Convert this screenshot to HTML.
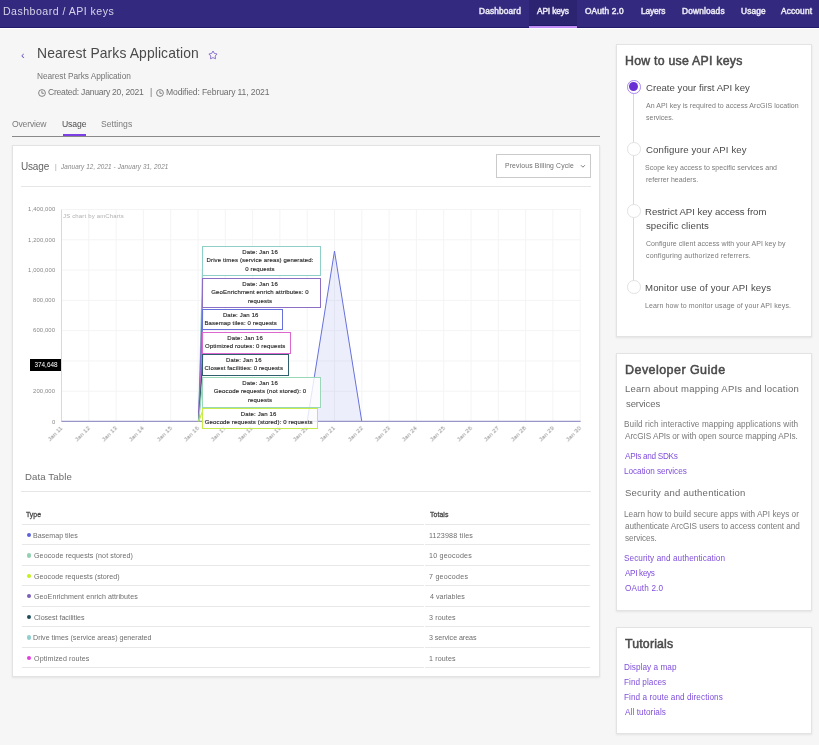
<!DOCTYPE html>
<html><head><meta charset="utf-8"><title>API keys</title>
<style>
html,body{margin:0;padding:0;}
body{width:819px;height:745px;overflow:hidden;position:relative;background:#f6f6f6;font-family:"Liberation Sans", sans-serif;}
.t{position:absolute;white-space:nowrap;line-height:1;will-change:transform;}
.r{position:absolute;}
.xl{transform-origin:100% 0;transform:rotate(-45deg);line-height:1;}
.tip{position:absolute;box-sizing:border-box;border:1.2px solid;background:rgba(255,255,255,0.82);font-size:6px;letter-spacing:0.14px;line-height:8.4px;color:#2a2a2a;text-align:center;padding-top:0.9px;padding-right:3px;white-space:nowrap;-webkit-text-stroke:0.15px #2a2a2a;will-change:transform;}
</style></head><body>
<div class="r" style="left:0px;top:0px;width:819px;height:28px;background:#33297e;"></div>
<div class="r" style="left:0px;top:27px;width:819px;height:1px;background:#22196b;"></div>
<div class="r" style="left:0px;top:28px;width:819px;height:1px;background:#ffffff;"></div>
<div class="t " style="left:3.00px;top:6.00px;font-size:10.6px;color:#d6d3ea;letter-spacing:0.4687px;">Dashboard / API keys</div>
<div class="r" style="left:528.9px;top:0px;width:48.1px;height:25px;background:#2c2470;"></div>
<div class="r" style="left:528.9px;top:25px;width:48.1px;height:1px;background:#201868;"></div>
<div class="r" style="left:528.9px;top:26px;width:48.1px;height:2px;background:#c18ef7;"></div>
<div class="t nav" style="left:479.00px;top:7.00px;font-size:8.3px;color:#e8e6f4;-webkit-text-stroke:0.5px #e8e6f4;letter-spacing:0.1569px;">Dashboard</div>
<div class="t nav" style="left:537.00px;top:7.00px;font-size:8.3px;color:#e8e6f4;-webkit-text-stroke:0.5px #e8e6f4;letter-spacing:-0.107px;">API keys</div>
<div class="t nav" style="left:585.00px;top:7.00px;font-size:8.3px;color:#e8e6f4;-webkit-text-stroke:0.5px #e8e6f4;letter-spacing:0.1555px;">OAuth 2.0</div>
<div class="t nav" style="left:641.00px;top:7.00px;font-size:8.3px;color:#e8e6f4;-webkit-text-stroke:0.5px #e8e6f4;letter-spacing:-0.106px;">Layers</div>
<div class="t nav" style="left:682.00px;top:7.00px;font-size:8.3px;color:#e8e6f4;-webkit-text-stroke:0.5px #e8e6f4;letter-spacing:0.1876px;">Downloads</div>
<div class="t nav" style="left:741.00px;top:7.00px;font-size:8.3px;color:#e8e6f4;-webkit-text-stroke:0.5px #e8e6f4;letter-spacing:0.146px;">Usage</div>
<div class="t nav" style="left:781.00px;top:7.00px;font-size:8.3px;color:#e8e6f4;-webkit-text-stroke:0.5px #e8e6f4;letter-spacing:0.169px;">Account</div>
<div class="t " style="left:20.50px;top:50.00px;font-size:11px;color:#6b4fc4;">&#8249;</div>
<div class="t " style="left:37.00px;top:47.00px;font-size:13.9px;color:#4a4a4a;letter-spacing:0.112px;">Nearest Parks Application</div>
<svg class="r" style="left:208px;top:50.2px;width:10px;height:10px" viewBox="0 0 10 10"><path d="M5.00 1.00 L6.35 3.44 L9.09 3.97 L7.19 6.01 L7.53 8.78 L5.00 7.60 L2.47 8.78 L2.81 6.01 L0.91 3.97 L3.65 3.44 Z" fill="none" stroke="#7d5fc8" stroke-width="0.85" stroke-linejoin="round"/></svg>
<div class="t " style="left:37.00px;top:72.00px;font-size:8.3px;color:#757575;letter-spacing:-0.0486px;">Nearest Parks Application</div>
<svg class="r" style="left:38.3px;top:89.2px;width:8px;height:8px" viewBox="0 0 8 8"><circle cx="4" cy="4" r="3.4" fill="none" stroke="#707070" stroke-width="0.85"/><path d="M3.9 1.9 V4.3 H5.9" fill="none" stroke="#707070" stroke-width="0.85"/></svg>
<div class="t " style="left:48.00px;top:88.00px;font-size:8.6px;color:#6e6e6e;letter-spacing:-0.2494px;">Created: January 20, 2021</div>
<div class="t " style="left:150.30px;top:88.00px;font-size:8.6px;color:#6e6e6e;">|</div>
<svg class="r" style="left:156.3px;top:89.2px;width:8px;height:8px" viewBox="0 0 8 8"><circle cx="4" cy="4" r="3.4" fill="none" stroke="#707070" stroke-width="0.85"/><path d="M3.9 1.9 V4.3 H5.9" fill="none" stroke="#707070" stroke-width="0.85"/></svg>
<div class="t " style="left:166.00px;top:88.00px;font-size:8.6px;color:#6e6e6e;letter-spacing:-0.1278px;">Modified: February 11, 2021</div>
<div class="t " style="left:12.00px;top:120.00px;font-size:8.6px;color:#7a7a7a;letter-spacing:-0.1861px;">Overview</div>
<div class="t " style="left:62.00px;top:120.00px;font-size:8.6px;color:#4c4c4c;letter-spacing:-0.106px;">Usage</div>
<div class="t " style="left:101.00px;top:120.00px;font-size:8.6px;color:#7a7a7a;letter-spacing:0.0209px;">Settings</div>
<div class="r" style="left:12px;top:136px;width:588px;height:1px;background:#8a8a8a;"></div>
<div class="r" style="left:63.3px;top:133.8px;width:22.7px;height:2.2px;background:#7b3fe4;"></div>
<div class="r" style="left:12px;top:145px;width:588px;height:532px;background:#fff;border:1px solid #e3e3e3;box-sizing:border-box;box-shadow:0 1px 2px rgba(0,0,0,0.08);"></div>
<div class="t " style="left:21.00px;top:162.00px;font-size:10px;color:#626262;letter-spacing:-0.178px;">Usage</div>
<div class="t " style="left:55.00px;top:164.00px;font-size:6.6px;color:#9a9a9a;">|</div>
<div class="t " style="left:61.00px;top:164.00px;font-size:6.3px;color:#858585;letter-spacing:0.1288px;font-style:italic;">January 12, 2021 - January 31, 2021</div>
<div class="r" style="left:496px;top:154px;width:95px;height:24px;border:1px solid #cacaca;box-sizing:border-box;"></div>
<div class="t " style="left:505.00px;top:163.00px;font-size:6.8px;color:#6e6e6e;letter-spacing:0.1623px;">Previous Billing Cycle</div>
<svg class="r" style="left:579.5px;top:164px;width:6px;height:5px" viewBox="0 0 6 5"><path d="M0.9 1.2 L2.9 3.2 L4.9 1.2" fill="none" stroke="#707070" stroke-width="0.9"/></svg>
<div class="r" style="left:21px;top:186px;width:570px;height:1px;background:#e6e6e6;"></div>
<svg class="r" style="left:0;top:0;width:819px;height:745px" viewBox="0 0 819 745"><line x1="61.5" y1="209.50" x2="580.6" y2="209.50" stroke="#f4f4f4" stroke-width="1"/><line x1="61.5" y1="239.79" x2="580.6" y2="239.79" stroke="#f4f4f4" stroke-width="1"/><line x1="61.5" y1="270.08" x2="580.6" y2="270.08" stroke="#f4f4f4" stroke-width="1"/><line x1="61.5" y1="300.37" x2="580.6" y2="300.37" stroke="#f4f4f4" stroke-width="1"/><line x1="61.5" y1="330.66" x2="580.6" y2="330.66" stroke="#f4f4f4" stroke-width="1"/><line x1="61.5" y1="360.95" x2="580.6" y2="360.95" stroke="#f4f4f4" stroke-width="1"/><line x1="61.5" y1="391.24" x2="580.6" y2="391.24" stroke="#f4f4f4" stroke-width="1"/><line x1="61.5" y1="421.53" x2="580.6" y2="421.53" stroke="#f4f4f4" stroke-width="1"/><line x1="61.50" y1="209.5" x2="61.50" y2="421.5" stroke="#f4f4f4" stroke-width="1"/><line x1="88.80" y1="209.5" x2="88.80" y2="421.5" stroke="#f4f4f4" stroke-width="1"/><line x1="116.10" y1="209.5" x2="116.10" y2="421.5" stroke="#f4f4f4" stroke-width="1"/><line x1="143.40" y1="209.5" x2="143.40" y2="421.5" stroke="#f4f4f4" stroke-width="1"/><line x1="170.70" y1="209.5" x2="170.70" y2="421.5" stroke="#f4f4f4" stroke-width="1"/><line x1="198.00" y1="209.5" x2="198.00" y2="421.5" stroke="#f4f4f4" stroke-width="1"/><line x1="225.30" y1="209.5" x2="225.30" y2="421.5" stroke="#f4f4f4" stroke-width="1"/><line x1="252.60" y1="209.5" x2="252.60" y2="421.5" stroke="#f4f4f4" stroke-width="1"/><line x1="279.90" y1="209.5" x2="279.90" y2="421.5" stroke="#f4f4f4" stroke-width="1"/><line x1="307.20" y1="209.5" x2="307.20" y2="421.5" stroke="#f4f4f4" stroke-width="1"/><line x1="334.50" y1="209.5" x2="334.50" y2="421.5" stroke="#f4f4f4" stroke-width="1"/><line x1="361.80" y1="209.5" x2="361.80" y2="421.5" stroke="#f4f4f4" stroke-width="1"/><line x1="389.10" y1="209.5" x2="389.10" y2="421.5" stroke="#f4f4f4" stroke-width="1"/><line x1="416.40" y1="209.5" x2="416.40" y2="421.5" stroke="#f4f4f4" stroke-width="1"/><line x1="443.70" y1="209.5" x2="443.70" y2="421.5" stroke="#f4f4f4" stroke-width="1"/><line x1="471.00" y1="209.5" x2="471.00" y2="421.5" stroke="#f4f4f4" stroke-width="1"/><line x1="498.30" y1="209.5" x2="498.30" y2="421.5" stroke="#f4f4f4" stroke-width="1"/><line x1="525.60" y1="209.5" x2="525.60" y2="421.5" stroke="#f4f4f4" stroke-width="1"/><line x1="552.90" y1="209.5" x2="552.90" y2="421.5" stroke="#f4f4f4" stroke-width="1"/><line x1="580.20" y1="209.5" x2="580.20" y2="421.5" stroke="#f4f4f4" stroke-width="1"/><line x1="61.5" y1="209.5" x2="61.5" y2="421.5" stroke="#d9d9d9" stroke-width="1"/><path d="M307.20 421.5 L334.50 251 L361.80 421.5 Z" fill="#6771dc" fill-opacity="0.12" stroke="none"/><path d="M307.20 421.5 L334.50 251 L361.80 421.5" fill="none" stroke="#6771dc" stroke-width="1"/><line x1="61.5" y1="421.3" x2="580.6" y2="421.3" stroke="#9896c8" stroke-width="1.3"/></svg>
<div class="t " style="right:763.80px;top:207.00px;font-size:5.9px;color:#888888;letter-spacing:0.12px;">1,400,000</div>
<div class="t " style="right:763.80px;top:238.00px;font-size:5.9px;color:#888888;letter-spacing:0.12px;">1,200,000</div>
<div class="t " style="right:763.80px;top:268.00px;font-size:5.9px;color:#888888;letter-spacing:0.12px;">1,000,000</div>
<div class="t " style="right:763.80px;top:298.00px;font-size:5.9px;color:#888888;letter-spacing:0.12px;">800,000</div>
<div class="t " style="right:763.80px;top:328.00px;font-size:5.9px;color:#888888;letter-spacing:0.12px;">600,000</div>
<div class="t " style="right:763.80px;top:389.00px;font-size:5.9px;color:#888888;letter-spacing:0.12px;">200,000</div>
<div class="t " style="right:763.80px;top:420.00px;font-size:5.9px;color:#888888;letter-spacing:0.12px;">0</div>
<div class="t " style="left:63.00px;top:213.00px;font-size:6px;color:#b0b0b0;letter-spacing:0.167px;">JS chart by amCharts</div>
<div class="t xl" style="right:759.70px;top:425.2px;font-size:6px;letter-spacing:0.15px;color:#8a8a8a;">Jan 11</div>
<div class="t xl" style="right:732.40px;top:425.2px;font-size:6px;letter-spacing:0.15px;color:#8a8a8a;">Jan 12</div>
<div class="t xl" style="right:705.10px;top:425.2px;font-size:6px;letter-spacing:0.15px;color:#8a8a8a;">Jan 13</div>
<div class="t xl" style="right:677.80px;top:425.2px;font-size:6px;letter-spacing:0.15px;color:#8a8a8a;">Jan 14</div>
<div class="t xl" style="right:650.50px;top:425.2px;font-size:6px;letter-spacing:0.15px;color:#8a8a8a;">Jan 15</div>
<div class="t xl" style="right:623.20px;top:425.2px;font-size:6px;letter-spacing:0.15px;color:#8a8a8a;">Jan 16</div>
<div class="t xl" style="right:595.90px;top:425.2px;font-size:6px;letter-spacing:0.15px;color:#8a8a8a;">Jan 17</div>
<div class="t xl" style="right:568.60px;top:425.2px;font-size:6px;letter-spacing:0.15px;color:#8a8a8a;">Jan 18</div>
<div class="t xl" style="right:541.30px;top:425.2px;font-size:6px;letter-spacing:0.15px;color:#8a8a8a;">Jan 19</div>
<div class="t xl" style="right:514.00px;top:425.2px;font-size:6px;letter-spacing:0.15px;color:#8a8a8a;">Jan 20</div>
<div class="t xl" style="right:486.70px;top:425.2px;font-size:6px;letter-spacing:0.15px;color:#8a8a8a;">Jan 21</div>
<div class="t xl" style="right:459.40px;top:425.2px;font-size:6px;letter-spacing:0.15px;color:#8a8a8a;">Jan 22</div>
<div class="t xl" style="right:432.10px;top:425.2px;font-size:6px;letter-spacing:0.15px;color:#8a8a8a;">Jan 23</div>
<div class="t xl" style="right:404.80px;top:425.2px;font-size:6px;letter-spacing:0.15px;color:#8a8a8a;">Jan 24</div>
<div class="t xl" style="right:377.50px;top:425.2px;font-size:6px;letter-spacing:0.15px;color:#8a8a8a;">Jan 25</div>
<div class="t xl" style="right:350.20px;top:425.2px;font-size:6px;letter-spacing:0.15px;color:#8a8a8a;">Jan 26</div>
<div class="t xl" style="right:322.90px;top:425.2px;font-size:6px;letter-spacing:0.15px;color:#8a8a8a;">Jan 27</div>
<div class="t xl" style="right:295.60px;top:425.2px;font-size:6px;letter-spacing:0.15px;color:#8a8a8a;">Jan 28</div>
<div class="t xl" style="right:268.30px;top:425.2px;font-size:6px;letter-spacing:0.15px;color:#8a8a8a;">Jan 29</div>
<div class="t xl" style="right:241.00px;top:425.2px;font-size:6px;letter-spacing:0.15px;color:#8a8a8a;">Jan 30</div>
<div class="r" style="left:30.3px;top:358.5px;width:30.9px;height:12.8px;background:#000;"></div>
<div class="t " style="left:45.75px;top:362.00px;font-size:6.4px;color:#fff;transform:translateX(-50%);">374,648</div>
<svg class="r" style="left:0;top:0;width:819px;height:745px" viewBox="0 0 819 745"><line x1="198.6" y1="421.5" x2="203.1" y2="247.3" stroke="#8fcfc8" stroke-width="1.2"/><line x1="198.6" y1="421.5" x2="203.1" y2="279.1" stroke="#8c6fc4" stroke-width="1.2"/><line x1="198.6" y1="421.5" x2="203.1" y2="310.4" stroke="#6771dc" stroke-width="1.2"/><line x1="198.6" y1="421.5" x2="203.1" y2="333.1" stroke="#dc67ce" stroke-width="1.2"/><line x1="198.6" y1="421.5" x2="203.1" y2="355.0" stroke="#2f5f6c" stroke-width="1.2"/><line x1="198.6" y1="421.5" x2="203.1" y2="378.0" stroke="#9ad6b8" stroke-width="1.2"/><line x1="198.6" y1="421.5" x2="203.1" y2="409.7" stroke="#c5ec4a" stroke-width="1.2"/></svg>
<div class="tip" style="left:201.8px;top:246.0px;width:119.1px;height:29.8px;border-color:#8fcfc8;"><div>Date: Jan 16</div><div>Drive times (service areas) generated:</div><div>0 requests</div></div>
<div class="tip" style="left:201.8px;top:277.8px;width:119.1px;height:30.3px;border-color:#8c6fc4;"><div>Date: Jan 16</div><div>GeoEnrichment enrich attributes: 0</div><div>requests</div></div>
<div class="tip" style="left:201.8px;top:309.1px;width:80.5px;height:21.2px;border-color:#6771dc;"><div>Date: Jan 16</div><div>Basemap tiles: 0 requests</div></div>
<div class="tip" style="left:201.8px;top:331.8px;width:89.4px;height:21.6px;border-color:#dc67ce;"><div>Date: Jan 16</div><div>Optimized routes: 0 requests</div></div>
<div class="tip" style="left:201.8px;top:353.7px;width:86.6px;height:21.9px;border-color:#2f5f6c;"><div>Date: Jan 16</div><div>Closest facilities: 0 requests</div></div>
<div class="tip" style="left:201.8px;top:376.7px;width:119.1px;height:30.6px;border-color:#9ad6b8;"><div>Date: Jan 16</div><div>Geocode requests (not stored): 0</div><div>requests</div></div>
<div class="tip" style="left:201.8px;top:408.4px;width:116.4px;height:21.2px;border-color:#c5ec4a;"><div>Date: Jan 16</div><div>Geocode requests (stored): 0 requests</div></div>
<div class="t " style="left:25.00px;top:472.00px;font-size:9.6px;color:#6a6a6a;letter-spacing:0.1236px;">Data Table</div>
<div class="r" style="left:21px;top:491px;width:570px;height:1px;background:#e6e6e6;"></div>
<div class="t " style="left:26.00px;top:512.00px;font-size:6.9px;color:#4a4a4a;-webkit-text-stroke:0.3px #4a4a4a;letter-spacing:0.014px;">Type</div>
<div class="t " style="left:430.00px;top:512.00px;font-size:6.9px;color:#4a4a4a;-webkit-text-stroke:0.3px #4a4a4a;letter-spacing:0.071px;">Totals</div>
<div class="r" style="left:22px;top:523.9px;width:401.8px;height:1px;background:#e8e8e8;"></div>
<div class="r" style="left:425.2px;top:523.9px;width:165.3px;height:1px;background:#e8e8e8;"></div>
<div class="r" style="left:22px;top:543.7px;width:401.8px;height:1px;background:#e8e8e8;"></div>
<div class="r" style="left:425.2px;top:543.7px;width:165.3px;height:1px;background:#e8e8e8;"></div>
<div class="r" style="left:22px;top:564.5px;width:401.8px;height:1px;background:#e8e8e8;"></div>
<div class="r" style="left:425.2px;top:564.5px;width:165.3px;height:1px;background:#e8e8e8;"></div>
<div class="r" style="left:22px;top:585.0px;width:401.8px;height:1px;background:#e8e8e8;"></div>
<div class="r" style="left:425.2px;top:585.0px;width:165.3px;height:1px;background:#e8e8e8;"></div>
<div class="r" style="left:22px;top:605.7px;width:401.8px;height:1px;background:#e8e8e8;"></div>
<div class="r" style="left:425.2px;top:605.7px;width:165.3px;height:1px;background:#e8e8e8;"></div>
<div class="r" style="left:22px;top:625.6px;width:401.8px;height:1px;background:#e8e8e8;"></div>
<div class="r" style="left:425.2px;top:625.6px;width:165.3px;height:1px;background:#e8e8e8;"></div>
<div class="r" style="left:22px;top:646.7px;width:401.8px;height:1px;background:#e8e8e8;"></div>
<div class="r" style="left:425.2px;top:646.7px;width:165.3px;height:1px;background:#e8e8e8;"></div>
<div class="r" style="left:22px;top:666.8px;width:401.8px;height:1px;background:#e8e8e8;"></div>
<div class="r" style="left:425.2px;top:666.8px;width:165.3px;height:1px;background:#e8e8e8;"></div>
<div class="r" style="left:26.6px;top:532.70px;width:4.8px;height:4.8px;border-radius:50%;background:#5b63d9;"></div>
<div class="t " style="left:33.00px;top:533.00px;font-size:7.1px;color:#6e6e6e;letter-spacing:0.0206px;">Basemap tiles</div>
<div class="t " style="left:429.00px;top:533.00px;font-size:7.1px;color:#6e6e6e;letter-spacing:0.1776px;">1123988 tiles</div>
<div class="r" style="left:26.6px;top:552.80px;width:4.8px;height:4.8px;border-radius:50%;background:#93d1b3;"></div>
<div class="t " style="left:34.00px;top:553.00px;font-size:7.1px;color:#6e6e6e;letter-spacing:0.0967px;">Geocode requests (not stored)</div>
<div class="t " style="left:429.00px;top:553.00px;font-size:7.1px;color:#6e6e6e;letter-spacing:0.22px;">10 geocodes</div>
<div class="r" style="left:26.6px;top:573.50px;width:4.8px;height:4.8px;border-radius:50%;background:#c4f01e;"></div>
<div class="t " style="left:34.00px;top:574.00px;font-size:7.1px;color:#6e6e6e;letter-spacing:0.0471px;">Geocode requests (stored)</div>
<div class="t " style="left:429.00px;top:574.00px;font-size:7.1px;color:#6e6e6e;letter-spacing:0.2541px;">7 geocodes</div>
<div class="r" style="left:26.6px;top:593.60px;width:4.8px;height:4.8px;border-radius:50%;background:#7b5eb6;"></div>
<div class="t " style="left:34.00px;top:594.00px;font-size:7.1px;color:#6e6e6e;letter-spacing:0.0661px;">GeoEnrichment enrich attributes</div>
<div class="t " style="left:430.00px;top:594.00px;font-size:7.1px;color:#6e6e6e;letter-spacing:0.04px;">4 variables</div>
<div class="r" style="left:26.6px;top:614.70px;width:4.8px;height:4.8px;border-radius:50%;background:#1e4d5c;"></div>
<div class="t " style="left:34.00px;top:615.00px;font-size:7.1px;color:#6e6e6e;letter-spacing:-0.0188px;">Closest facilities</div>
<div class="t " style="left:429.00px;top:615.00px;font-size:7.1px;color:#6e6e6e;letter-spacing:0.1351px;">3 routes</div>
<div class="r" style="left:26.6px;top:635.00px;width:4.8px;height:4.8px;border-radius:50%;background:#92cfcf;"></div>
<div class="t " style="left:33.00px;top:635.00px;font-size:7.1px;color:#6e6e6e;letter-spacing:0.0052px;">Drive times (service areas) generated</div>
<div class="t " style="left:429.00px;top:635.00px;font-size:7.1px;color:#6e6e6e;letter-spacing:-0.0394px;">3 service areas</div>
<div class="r" style="left:26.6px;top:655.70px;width:4.8px;height:4.8px;border-radius:50%;background:#e23fdf;"></div>
<div class="t " style="left:34.00px;top:656.00px;font-size:7.1px;color:#6e6e6e;letter-spacing:0.1166px;">Optimized routes</div>
<div class="t " style="left:429.00px;top:656.00px;font-size:7.1px;color:#6e6e6e;letter-spacing:0.1351px;">1 routes</div>
<div class="r" style="left:616px;top:44px;width:196px;height:293px;background:#fff;border:1px solid #e3e3e3;box-sizing:border-box;box-shadow:0 1px 2px rgba(0,0,0,0.08);"></div>
<div class="r" style="left:616px;top:353px;width:196px;height:258px;background:#fff;border:1px solid #e3e3e3;box-sizing:border-box;box-shadow:0 1px 2px rgba(0,0,0,0.08);"></div>
<div class="r" style="left:616px;top:627px;width:196px;height:107px;background:#fff;border:1px solid #e3e3e3;box-sizing:border-box;box-shadow:0 1px 2px rgba(0,0,0,0.08);"></div>
<div class="t " style="left:625.00px;top:55.00px;font-size:12.3px;color:#4a4a4a;-webkit-text-stroke:0.5px #4a4a4a;letter-spacing:0.253px;">How to use API keys</div>
<div class="r" style="left:633.1px;top:93px;width:1px;height:188px;background:#d9d9d9;"></div>
<div class="r" style="left:627px;top:80.10px;width:13.6px;height:13.6px;border-radius:50%;border:1px solid #a985f5;background:#fff;box-sizing:border-box;"></div>
<div class="r" style="left:629.3px;top:82.40px;width:9px;height:9px;border-radius:50%;background:#6a2fd4;"></div>
<div class="r" style="left:627px;top:142.30px;width:13.6px;height:13.6px;border-radius:50%;border:1px solid #e2e2e2;background:#fff;box-sizing:border-box;"></div>
<div class="r" style="left:627px;top:204.00px;width:13.6px;height:13.6px;border-radius:50%;border:1px solid #e2e2e2;background:#fff;box-sizing:border-box;"></div>
<div class="r" style="left:627px;top:280.20px;width:13.6px;height:13.6px;border-radius:50%;border:1px solid #e2e2e2;background:#fff;box-sizing:border-box;"></div>
<div class="t " style="left:646.00px;top:83.00px;font-size:9.6px;color:#4a4a4a;letter-spacing:0.0167px;">Create your first API key</div>
<div class="t " style="left:646.00px;top:102.00px;font-size:7px;color:#7a7a7a;letter-spacing:0.0432px;">An API key is required to access ArcGIS location</div>
<div class="t " style="left:646.00px;top:114.00px;font-size:7px;color:#7a7a7a;">services.</div>
<div class="t " style="left:646.00px;top:145.00px;font-size:9.6px;color:#4a4a4a;letter-spacing:0.1172px;">Configure your API key</div>
<div class="t " style="left:645.00px;top:164.00px;font-size:7px;color:#7a7a7a;letter-spacing:0.032px;">Scope key access to specific services and</div>
<div class="t " style="left:646.00px;top:176.00px;font-size:7px;color:#7a7a7a;">referrer headers.</div>
<div class="t " style="left:645.00px;top:207.00px;font-size:9.6px;color:#4a4a4a;letter-spacing:-0.0263px;">Restrict API key access from</div>
<div class="t " style="left:646.00px;top:221.00px;font-size:9.6px;color:#4a4a4a;letter-spacing:0.0637px;">specific clients</div>
<div class="t " style="left:646.00px;top:240.00px;font-size:7px;color:#7a7a7a;letter-spacing:0.0508px;">Configure client access with your API key by</div>
<div class="t " style="left:646.00px;top:252.00px;font-size:7px;color:#7a7a7a;letter-spacing:0.1742px;">configuring authorized referrers.</div>
<div class="t " style="left:645.00px;top:283.00px;font-size:9.6px;color:#4a4a4a;letter-spacing:0.1461px;">Monitor use of your API keys</div>
<div class="t " style="left:645.00px;top:302.00px;font-size:7px;color:#7a7a7a;letter-spacing:0.1108px;">Learn how to monitor usage of your API keys.</div>
<div class="t " style="left:625.00px;top:364.00px;font-size:12.5px;color:#4a4a4a;-webkit-text-stroke:0.5px #4a4a4a;letter-spacing:0.4482px;">Developer Guide</div>
<div class="t " style="left:625.00px;top:384.00px;font-size:9.5px;color:#6a6a6a;letter-spacing:0.2212px;">Learn about mapping APIs and location</div>
<div class="t " style="left:626.00px;top:399.00px;font-size:9.5px;color:#6a6a6a;letter-spacing:-0.0977px;">services</div>
<div class="t " style="left:624.00px;top:421.00px;font-size:8.2px;color:#7a7a7a;letter-spacing:0.1019px;">Build rich interactive mapping applications with</div>
<div class="t " style="left:625.00px;top:433.00px;font-size:8.2px;color:#7a7a7a;letter-spacing:-0.036px;">ArcGIS APIs or with open source mapping APIs.</div>
<div class="t " style="left:625.00px;top:453.00px;font-size:8.2px;color:#8150dc;letter-spacing:-0.3067px;">APIs and SDKs</div>
<div class="t " style="left:624.00px;top:468.00px;font-size:8.2px;color:#8150dc;letter-spacing:-0.0321px;">Location services</div>
<div class="t " style="left:625.00px;top:488.00px;font-size:9.5px;color:#6a6a6a;letter-spacing:0.217px;">Security and authentication</div>
<div class="t " style="left:624.00px;top:511.00px;font-size:8.2px;color:#7a7a7a;letter-spacing:0.0121px;">Learn how to build secure apps with API keys or</div>
<div class="t " style="left:625.00px;top:523.00px;font-size:8.2px;color:#7a7a7a;letter-spacing:-0.0477px;">authenticate ArcGIS users to access content and</div>
<div class="t " style="left:625.00px;top:535.00px;font-size:8.2px;color:#7a7a7a;letter-spacing:-0.0734px;">services.</div>
<div class="t " style="left:624.00px;top:555.00px;font-size:8.2px;color:#8150dc;letter-spacing:0.0864px;">Security and authentication</div>
<div class="t " style="left:625.00px;top:570.00px;font-size:8.2px;color:#8150dc;letter-spacing:-0.337px;">API keys</div>
<div class="t " style="left:625.00px;top:585.00px;font-size:8.2px;color:#8150dc;letter-spacing:0.154px;">OAuth 2.0</div>
<div class="t " style="left:625.00px;top:638.00px;font-size:12.3px;color:#4a4a4a;-webkit-text-stroke:0.5px #4a4a4a;letter-spacing:0.182px;">Tutorials</div>
<div class="t " style="left:624.00px;top:664.00px;font-size:8.2px;color:#8150dc;letter-spacing:0.0523px;">Display a map</div>
<div class="t " style="left:624.00px;top:679.00px;font-size:8.2px;color:#8150dc;letter-spacing:0.031px;">Find places</div>
<div class="t " style="left:624.00px;top:694.00px;font-size:8.2px;color:#8150dc;letter-spacing:0.0687px;">Find a route and directions</div>
<div class="t " style="left:625.00px;top:709.00px;font-size:8.2px;color:#8150dc;letter-spacing:0.074px;">All tutorials</div>
</body></html>
